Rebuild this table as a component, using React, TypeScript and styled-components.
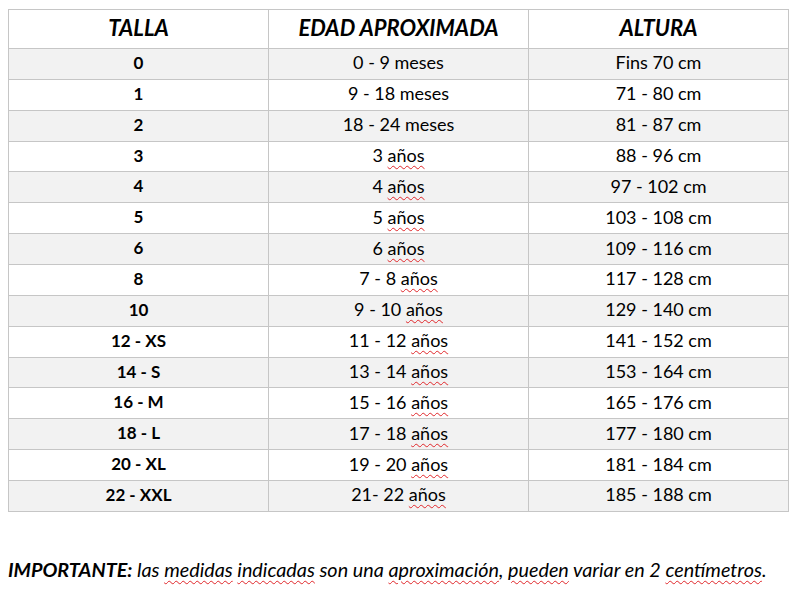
import { createGlobalStyle } from 'styled-components';
import styled from 'styled-components';

const GlobalStyle = createGlobalStyle`
  html, body {
    margin: 0;
    padding: 0;
    background: #ffffff;
  }
  body {
    font-family: Lato, 'Open Sans', sans-serif;
    color: #000000;
  }
`;

const Page = styled.div`
  width: 798px;
  height: 596px;
  padding: 9px 0 0 8px;
  box-sizing: border-box;
  display: flex;
  flex-direction: column;
`;

const SizeTable = styled.table`
  width: 781px;
  border-collapse: collapse;
  table-layout: fixed;
`;

const HeadCell = styled.th`
  height: 34px;
  padding: 0 0 4px 0;
  border: 1px solid #c6c6c6;
  font-size: 22px;
  font-weight: 700;
  font-style: italic;
  text-align: center;
  vertical-align: middle;
  background: #ffffff;
`;

const Cell = styled.td<{ $shade: boolean; $bold?: boolean }>`
  height: 26.87px;
  padding: 0 0 3px 0;
  border: 1px solid #c6c6c6;
  font-size: ${(p) => (p.$bold ? '17px' : '18px')};
  font-weight: ${(p) => (p.$bold ? 700 : 400)};
  text-align: center;
  vertical-align: middle;
  background: ${(p) => (p.$shade ? '#f2f2f2' : '#ffffff')};
`;

const Misspelled = styled.span`
  text-decoration: underline wavy #e0262a;
  text-decoration-thickness: 1px;
  text-underline-offset: 3px;
`;

const Note = styled.p`
  margin: 45px 0 0 0;
  font-size: 19.8px;
  font-style: italic;
`;

const Strong = styled.strong`
  font-weight: 700;
`;

type Row = { size: string; age: string; height: string };

const rows: Row[] = [
  { size: '0', age: '0 - 9 meses', height: 'Fins 70 cm' },
  { size: '1', age: '9 - 18 meses', height: '71 - 80 cm' },
  { size: '2', age: '18 - 24 meses', height: '81 - 87 cm' },
  { size: '3', age: '3 años', height: '88 - 96 cm' },
  { size: '4', age: '4 años', height: '97 - 102 cm' },
  { size: '5', age: '5 años', height: '103 - 108 cm' },
  { size: '6', age: '6 años', height: '109 - 116 cm' },
  { size: '8', age: '7 - 8 años', height: '117 - 128 cm' },
  { size: '10', age: '9 - 10 años', height: '129 - 140 cm' },
  { size: '12 - XS', age: '11 - 12 años', height: '141 - 152 cm' },
  { size: '14 - S', age: '13 - 14 años', height: '153 - 164 cm' },
  { size: '16 - M', age: '15 - 16 años', height: '165 - 176 cm' },
  { size: '18 - L', age: '17 - 18 años', height: '177 - 180 cm' },
  { size: '20 - XL', age: '19 - 20 años', height: '181 - 184 cm' },
  { size: '22 - XXL', age: '21- 22 años', height: '185 - 188 cm' },
];

function AgeText({ text }: { text: string }) {
  if (!text.endsWith('años')) return <>{text}</>;
  return (
    <>
      {text.slice(0, -4)}
      <Misspelled>años</Misspelled>
    </>
  );
}

export default function App() {
  return (
    <>
      <GlobalStyle />
      <Page>
        <SizeTable>
          <thead>
            <tr>
              <HeadCell>TALLA</HeadCell>
              <HeadCell>EDAD APROXIMADA</HeadCell>
              <HeadCell>ALTURA</HeadCell>
            </tr>
          </thead>
          <tbody>
            {rows.map((r, i) => (
              <tr key={r.size}>
                <Cell $shade={i % 2 === 0} $bold>
                  {r.size}
                </Cell>
                <Cell $shade={i % 2 === 0}>
                  <AgeText text={r.age} />
                </Cell>
                <Cell $shade={i % 2 === 0}>{r.height}</Cell>
              </tr>
            ))}
          </tbody>
        </SizeTable>
        <Note>
          <Strong>IMPORTANTE:</Strong> las <Misspelled>medidas</Misspelled>{' '}
          <Misspelled>indicadas</Misspelled> son una <Misspelled>aproximación</Misspelled>,{' '}
          <Misspelled>pueden</Misspelled> variar en 2 <Misspelled>centímetros</Misspelled>.
        </Note>
      </Page>
    </>
  );
}
